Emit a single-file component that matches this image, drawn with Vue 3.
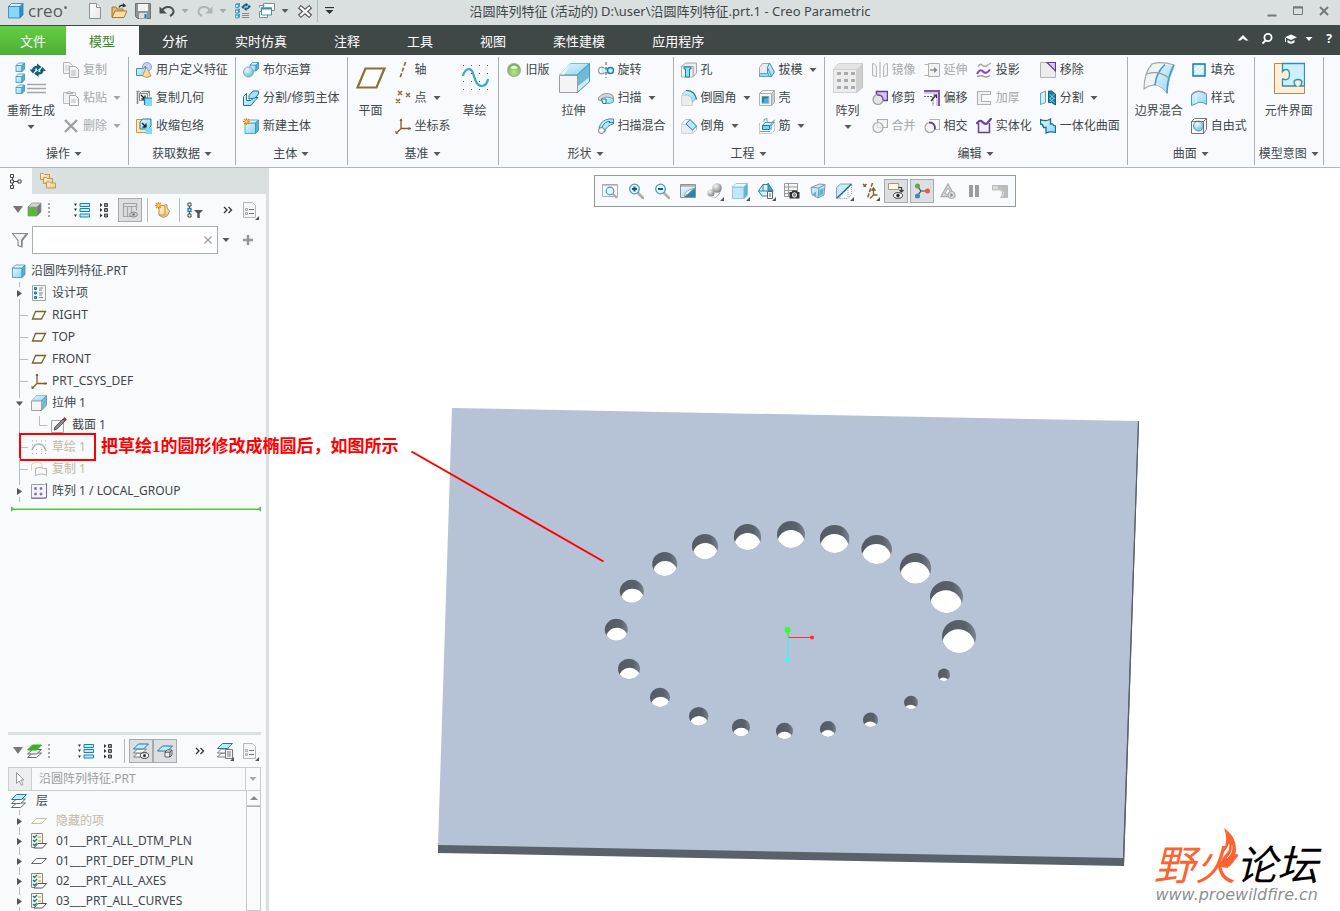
<script setup>
import { h, ref } from 'vue'

const BLUE = ['url(#g-blue)', '#e8f8fe', '#5badd0', '#3a94ba']
const GRAY = ['#f4f4f4', '#fff', '#c9cbcc', '#a0a3a5']

/** Box in a cabinet projection: front face s x s, depth d. */
const cube = (x, y, s, d, [front, top, side, stroke]) =>
  `<g stroke="${stroke}" stroke-width=".8" stroke-linejoin="round">
    <path d="M${x} ${y + d}h${s}v${s}h-${s}z" fill="${front}"/>
    <path d="M${x} ${y + d}l${d}-${d}h${s}l-${d} ${d}z" fill="${top}"/>
    <path d="M${x + s} ${y + d}l${d}-${d}v${s}l-${d} ${d}z" fill="${side}"/>
  </g>`

const sheet = (x, y, w, hgt, k, fill, stroke) =>
  `<path d="M${x + k} ${y}h${w - k}l-${k} ${hgt}H${x}z" fill="${fill}" stroke="${stroke}" stroke-linejoin="round"/>`

const swirl = (x, y) =>
  `<g transform="translate(${x} ${y})" fill="none" stroke="#145f80" stroke-width="2.400"><path d="M2.500 6.500Q3 3 7 3"/><path d="M12 6Q11.500 9.500 7.500 9.500"/><path d="M6.500-.500l4.500 3.500-4.500 3.500zM8 6l-4.500 3.500L8 13z" fill="#145f80" stroke="none"/><path d="M-1 5.500h6.500L2.500 9.500zM15.500 7H9l3-4z" fill="#145f80" stroke="none"/></g>`

const magnifier = (extra) =>
  `<path d="M10 10l5 5" stroke="#b5ad9d" stroke-width="2.600" stroke-linecap="round"/><circle cx="6.500" cy="6" r="4.800" fill="#e4f5fc" stroke="#4b9abc" stroke-width="1.300"/>${extra}`

const icons = {
  logo: cube(0.5, 0.5, 11.5, 3, ['#8ad6f7', '#d6f1fd', '#2d92c2', '#2584b4']),
  newDoc: '<path d="M2.500.5h7l4 4v11h-11z" fill="url(#g-paper)" stroke="#8c9191"/><path d="M9.500.5v4h4" fill="#fff" stroke="#8c9191"/>',
  open: '<path d="M1 14V4h4l1 2h6v8z" fill="#e9b864" stroke="#a77b30"/><path d="M1 14.500L4 8h12l-3 6.500z" fill="#fbe0a4" stroke="#a77b30"/><path d="M8 4.500Q9 1.500 13 2.500" fill="none" stroke="#333" stroke-width="1.400"/><path d="M12 0l3.500 3-4 1.500z" fill="#333"/>',
  save: '<path d="M.5.5h15v15h-13l-2-2z" fill="#8e9394" stroke="#6c7172"/><path d="M3 1h10v7H3z" fill="#f2f3f3"/><path d="M4 10h8v5.500H4z" fill="#dce0e1"/><path d="M9.500 11h2v4h-2z" fill="#1673a0"/>',
  undo: '<path d="M3 8C5 3 13 2.500 14.500 8q.5 3-3.500 5" fill="none" stroke="#4d4f4f" stroke-width="2"/><path d="M.5 3.500v7H8z" fill="#4d4f4f"/>',
  redo: '<path d="M13 8C11 3 3 2.500 1.500 8q-.5 3 3.500 5" fill="none" stroke="#b0b4b4" stroke-width="2"/><path d="M15.500 3.500v7H8z" fill="#b0b4b4"/>',
  regenSmall: cube(0.5, 0.5, 3, 1, BLUE) + cube(0.5, 6, 3, 1, BLUE) + cube(0.5, 11, 3, 1, BLUE) + `<g transform="translate(6 0) scale(.62)">${swirl(1, 0)}</g>` + '<path d="M7 10.500h7M7 12.500h7M7 14.500h7" stroke="#888"/>',
  windows: '<path d="M4.500.5h11v7h-11z" fill="#fff" stroke="#888"/><path d="M.5 8.500h8v6h-8zM.5 4.500v-2h5" fill="#fff" stroke="#888"/><path d="M2.500 5h10v7h-10z" fill="#fff" stroke="#3092bd"/><path d="M2 4.500h11v2H2z" fill="#3092bd"/>',
  closeWin: '<path d="M4 5l8 7M12 5l-8 7" stroke="#444" stroke-width="4.400" stroke-linecap="square"/><path d="M4 5l8 7M12 5l-8 7" stroke="#f5f5f5" stroke-width="2.400" stroke-linecap="square"/>',
  caret: '<path d="M.5 2h7L4 6z" fill="currentColor"/>',
  customize: '<path d="M0 .5h9" stroke="#333" stroke-width="1.300"/><path d="M.5 3h8L4.500 7z" fill="#333"/>',
  min: '<path d="M3.500 12.500h9" stroke="#777" stroke-width="2"/>',
  max: '<path d="M3.500 4h9v7.500h-9z" fill="none" stroke="#777"/><path d="M3 4.500h10" stroke="#777" stroke-width="2"/>',
  close: '<path d="M4 4l8 8M12 4l-8 8" stroke="#777" stroke-width="2"/>',
  chevronUp: '<path d="M2.500 9.500L8 4l5.500 5.500H10.500L8 7.500l-2.500 2z" fill="#fff"/>',
  search: '<circle cx="9" cy="6.500" r="3.600" fill="none" stroke="#fff" stroke-width="1.800"/><path d="M6.500 9.500l-3 3" stroke="#fff" stroke-width="2"/>',
  hat: '<path d="M8 3.500l6 2.800-6 2.800-6-2.800z" fill="#fff"/><path d="M4.500 9v2.500q3.500 2.500 7 0V9L8 10.700z" fill="#fff"/><path d="M2.500 7v4" stroke="#fff"/>',

  regen: cube(1, 1, 6, 2.500, BLUE) + cube(1, 12, 6, 2.500, BLUE) + cube(1, 23, 6, 2.500, BLUE) + swirl(15.500, 2) + '<path d="M12 22.500h19M12 26.500h19M12 30.500h19" stroke="#a3a6a8" stroke-width="1.600"/>',
  copy: '<path d="M.5.5h6l3 3v8h-9z" fill="#f4f4f4" stroke="#b3b5b6"/><path d="M2 4h5M2 6h5M2 8h5" stroke="#c6c8c9"/><path d="M6.500 4.500h6l3 3v8h-9z" fill="#f4f4f4" stroke="#a8aaab"/><path d="M8 9h5M8 11h5M8 13h5" stroke="#b5b7b8"/>',
  paste: '<path d="M.5 2.500h12v11H.500z" fill="#f2f2f2" stroke="#b8babb"/><path d="M3.500 3.500v-1h1.500q1.500-3 3 0H9.500v1z" fill="#ddd" stroke="#a9abac"/><path d="M6.500 5.500h6l3 3v7h-9z" fill="#fafafa" stroke="#a5a7a8"/><path d="M8 10h5M8 12h5" stroke="#b5b7b8"/>',
  del: '<path d="M2 2l12 12M14 2L2 14" stroke="#9d9fa0" stroke-width="2.400"/>',
  udf: '<circle cx="11" cy="5" r="4.500" fill="#c7d3f5" stroke="#8b9bd2"/><path d="M.5 6.500h7l2-2.500v7l-2 2.500h-7z" fill="url(#g-blue)" stroke="#3b94ba"/><path d="M10.500 5l4.500 9q-4 3-8.500 0z" fill="url(#g-tan)" stroke="#b08d4c" stroke-width=".8"/>',
  copyGeom: '<path d="M1.500 14V1.500M.5 1.500h3M7 1.500h7" stroke="#888" stroke-width="1.600"/><path d="M3.500 3.500h8v7h-8zM11.500 3.500l2-2M3.500 3.500l2-2h8v5" fill="#eceded" stroke="#888"/><path d="M5 5l4 4M9 5.500V9H5.500" stroke="#222" fill="none" stroke-width="1.300"/><path d="M9 8h7v8H9z" fill="#7fd8f7"/><path d="M8.500 15V8H16" fill="none" stroke="#157ba6" stroke-width="1.200"/>',
  shrink: '<path d="M.5 1.500h12v13H.500z" fill="#ffe6b2" stroke="#c59b48"/><path d="M4 4l2.500-3H15v7l-3 3H4z" fill="url(#g-blue)" stroke="#1e7ca5"/><path d="M6 5l4 4M10 5.500V9H6.500" stroke="#123" fill="none" stroke-width="1.300"/><path d="M9.500 9.500H16V16H9.500z" fill="#7fd8f7"/>',
  bool: cube(7, 0.5, 6, 2.500, BLUE) + '<circle cx="5.500" cy="10" r="5" fill="url(#g-ball)" stroke="#5aa5c4" stroke-width=".8"/>',
  splitBody: '<path d="M.5 6.500l3-3v7H8l3-3h4l-3 3-4 5H.500z" fill="url(#g-blue)" stroke="#1b759d"/><path d="M6 9V5.500L10 1h5.500v3L12 8z" fill="#a9dff5" stroke="#1b759d"/>',
  newBody: cube(2, 2, 10.5, 3, BLUE) + '<path d="M3.500 0v7M0 3.500h7M1 1l5 5M6 1L1 6" stroke="#f08a00" stroke-width="1.200"/><circle cx="3.500" cy="3.500" r="1.200" fill="#ffe066"/>',
  plane: '<path d="M10.500 6.500h19l-8 19H2.500z" fill="#fff" stroke="#8a6f33" stroke-width="2.200"/>',
  axis: '<path d="M10.500 0L5 16" stroke="#8a6f33" stroke-width="1.700" stroke-dasharray="4 2"/>',
  points: '<path d="M3 1l4 4M7 1L3 5M11 3l4 4M15 3l-4 4M1 9l4 4M5 9l-4 4" stroke="#8a6f33" stroke-width="1.500"/>',
  csys: '<path d="M6 1v9.500h10M6 10.500l-5 5" fill="none" stroke="#7c6226" stroke-width="1.300"/><path d="M4.500 3L6 .5 7.500 3zM13.500 9l2.500 1.500-2.500 1.500zM.5 12.500v3h3z" fill="#7c6226"/>',
  sketch: '<g fill="#555"><path d="M4 3h1v1H4zM12 3h1v1h-1zM20 3h1v1h-1zM28 3h1v1h-1zM4 11h1v1H4zM12 11h1v1h-1zM20 11h1v1h-1zM28 11h1v1h-1zM4 19h1v1H4zM12 19h1v1h-1zM20 19h1v1h-1zM28 19h1v1h-1zM4 27h1v1H4zM12 27h1v1h-1zM20 27h1v1h-1zM28 27h1v1h-1z"/></g><path d="M4 14C6 6 12 5 14 11s3 13 9 13q5-.5 6-7" fill="none" stroke="#3aa6d4" stroke-width="2.200"/>',
  legacy: '<circle cx="8" cy="8" r="7" fill="#a3a8a3"/><circle cx="8" cy="8" r="6" fill="url(#g-green)"/><path d="M4 6q4-5 8 0-4 2-8 0z" fill="#e9fbd8"/>',
  extrude: '<path d="M1.500 12.500L12.500 1.500h19l-12 11z" fill="url(#g-blue)" stroke="#7fb9cf"/><path d="M12.500 1.500L1.500 12.500h5z" fill="#e8f6fb"/><path d="M19.500 12.500l12-11v18l-12 11z" fill="#6fbad7" stroke="#4796b4"/><path d="M19.500 29.500v-5l11.500-9v4z" fill="#d2eefa"/><path d="M1.500 13.500h18v17h-18z" fill="#f5f4f4" stroke="#9a9c9e"/>',
  revolve: '<ellipse cx="3.500" cy="8.500" rx="3" ry="3.300" fill="#fff" stroke="#999" stroke-width="1.300"/><path d="M3 5.500Q8 7 12 5.500v6Q8 10 3 11.500" fill="#d4effa" stroke="#60a9c8" stroke-width=".7"/><circle cx="12.500" cy="8.500" r="3" fill="#cbeefb" stroke="#1d7fa8" stroke-width="1.500"/><path d="M8 0v16" stroke="#555" stroke-dasharray="3 2"/>',
  sweep: '<path d="M.5 7.500L5 4q6-2 10 1.500l.5 4-4 1.500q-4-3-7 0L.500 10z" fill="#d4d6d8" stroke="#95999c"/><path d="M4 8.500q5-3 11.500.5v3q-3 2-5.500 1.500l-6-1z" fill="url(#g-blue)" stroke="#5ba6c4"/><path d="M3.500 9h4.500v4.500H5z" fill="#e3f6fd" stroke="#24799c"/>',
  sweptBlend: '<path d="M1 10Q3 2 11 1h4.500v5Q9 7 6.500 14z" fill="url(#g-blue)" stroke="#3b93b8"/><path d="M4 9q3-6 8-5.500" fill="none" stroke="#1f7fa8"/><circle cx="3.500" cy="12.500" r="3" fill="#f3f3f3" stroke="#777"/><path d="M11 4.500h4.500" stroke="#1f7fa8"/>',
  hole: '<path d="M.5 4.500l4-3.500h11v10L12 15V4.500z" fill="#ececec" stroke="#a3a5a7"/><path d="M.5 4.500H12V15H.5z" fill="#f7f7f7" stroke="#aaacae"/><path d="M3 5h7v2H8.500v8h-4V7H3z" fill="#8edcf6" stroke="#1680ac"/>',
  round: '<path d="M.5 5.500h6q5 0 5 5v5H.500z" fill="#ececee" stroke="#d3d4d6"/><path d="M1 4l4-3.500q9 0 10.500 8l-4 3.500Q11 5 3 4z" fill="url(#g-blue)" stroke="#7bbdd6" stroke-width=".7"/><path d="M5 .5q9 0 10.500 9" fill="none" stroke="#1a7ba3" stroke-width="1.200"/>',
  chamfer: '<path d="M.5 6.500h5l6 5v4H.500z" fill="#ececee" stroke="#d3d4d6"/><path d="M.5 6l4-4.500h4M15.500 8v4l-4 3.500" fill="none" stroke="#bbb"/><path d="M5 6l4-4.500L15.500 8l-4 4z" fill="#b5eafb" stroke="#1a7ba3"/>',
  draft: '<path d="M.5 5.500l3-4h7l-2 4v9h-8z" fill="#ececec" stroke="#a3a5a7"/><path d="M8.500 14V5.500l2-4.500 5 9-3 4.500z" fill="url(#g-blue)" stroke="#3c93b7"/><path d="M.5 14.500h9v-3h-9z" fill="#8ed9f4" stroke="#5ba6c4"/><path d="M8.500 5.500l4 9" stroke="#3c93b7"/>',
  shell: cube(0.5, 0.5, 12, 3, GRAY) + '<path d="M3 6.500h7v7H3z" fill="#4ea9cd" stroke="#8ccde4"/><path d="M3 6.500h7l-2 2H5v3l-2 2z" fill="#2d7e9f"/>',
  rib: '<path d="M.5 5.500V15.500H12l3.500-3V1.500l-3 3v6l-3 0" fill="none" stroke="#999" stroke-dasharray="1 1"/><path d="M3.500 7.500l2.500-3h9l-3 3z" fill="#d4f2fc" stroke="#4796b4"/><path d="M3.500 7.500h7v4h-7z" fill="#79d3f3" stroke="#1b7ba4"/><path d="M5 4V1.500l3-1v3.500M12 12V6l3-3.500" fill="none" stroke="#5ba6c4"/><path d="M1 13.500h10" stroke="#5ba6c4"/>',
  pattern: '<path d="M1.500 7.500l5-6h24v24l-6 5h-23z" fill="#cfcfcf" stroke="#c0c1c2"/><path d="M1.500 7.500l5-6h24l-6 6z" fill="#e4e4e4"/><path d="M1.500 7.500h23v23h-23z" fill="#ececec" stroke="#d0d1d2"/><g fill="#a9abac"><path d="M5 10h4v3H5zM12 10h4v3h-4zM19 10h4v3h-4zM5 17h4v3H5zM12 17h4v3h-4zM19 17h4v3h-4zM5 24h4v3H5zM12 24h4v3h-4zM19 24h4v3h-4z"/></g>',
  mirror: '<path d="M.5 1.500q4 0 4 5v8l-4-1zM15.500 1.500q-4 0-4 5v8l4-1z" fill="#f2f2f2" stroke="#b4b6b7"/><path d="M8 0v16" stroke="#a8aaab"/>',
  trim: '<path d="M4.500 1.500h11v9h-11z" fill="#d6c9f0" stroke="#5c3f98" stroke-width="1.500"/><circle cx="6" cy="9.500" r="5" fill="#e4e4e6" stroke="#9b9d9f" stroke-width="1.200"/><path d="M5 5q6-.5 6 5" fill="none" stroke="#7a4fb8" stroke-width="1.400"/>',
  merge: '<path d="M5.500 1.500h10v8h-10z" fill="#f2f2f2" stroke="#aaacad" stroke-width="1.200"/><circle cx="6" cy="9.500" r="5" fill="#efefef" fill-opacity=".7" stroke="#aaacad" stroke-width="1.200"/>',
  extend: '<path d="M.5 2.500h4v11h-4M4.500 2.500h3" fill="none" stroke="#b0b2b3"/><path d="M4.500 1.500h11v13h-11z" fill="#f1f1f1" stroke="#aeb0b1"/><path d="M6 8h5" stroke="#888" stroke-width="1.300"/><path d="M10 5l3.500 3L10 11z" fill="#888"/>',
  offset: '<path d="M0 1h15v15" fill="none" stroke="#8055b0" stroke-width="2"/><path d="M0 3h13v13" fill="none" stroke="#d6c8ea" stroke-width="2"/><path d="M0 6.500h9V16" fill="none" stroke="#666" stroke-dasharray="2 1"/><path d="M7 11l5-6M9.500 5H12.500v3" fill="none" stroke="#333" stroke-width="1.200"/>',
  intersect: '<path d="M5.500 1.500h10v10h-4" fill="none" stroke="#b0b2b3" stroke-width="1.200"/><circle cx="6" cy="9.500" r="5" fill="#f3f3f4" stroke="#a0a2a4" stroke-width="1.200"/><path d="M5 4.500q6.500 0 6 7" fill="none" stroke="#5e3c94" stroke-width="1.800"/>',
  project: '<path d="M2 5q2-4 4-2t4 1 5-3" fill="none" stroke="#a5a7a8" stroke-width="1.400"/><path d="M1 12q3-6 6-2.500t7-2" fill="none" stroke="#8a3fbd" stroke-width="2"/><path d="M1 14.500q5-1.500 7 0t6-1" fill="none" stroke="#9b9d9f" stroke-width="1.400"/>',
  thicken: '<path d="M1.500 1.500h13v3h-9v7h9v3h-13z" fill="#f2f2f2" stroke="#b0b2b3" stroke-width="1.200"/>',
  solidify: '<path d="M2.500 5v9.500h11V5" fill="#f3eefb" stroke="#694299" stroke-width="1.500"/><path d="M.5 6q3-5 6-2t5 1l4-5" fill="none" stroke="#694299" stroke-width="2.200"/>',
  remove: '<path d="M.5.5h15v15H.500z" fill="#ececec" stroke="#b1b2b3"/><path d="M7 .5h8.500V9z" fill="#d8cbf1" stroke="#5e3c94" stroke-width="1.200"/>',
  split: '<path d="M.5 3.500l5-2.500v11.500l-5 2z" fill="#cdeffb" stroke="#60a7c4"/><path d="M8.500 1h3l4 3v11l-4-2.500h-3z" fill="#1d7ba3" stroke="#145f80"/><path d="M9.500 4l5 5M9.500 8l5 5M14.500 4l-5 5M14.500 8l-5 4" stroke="#a9dff5" stroke-width=".8"/>',
  unify: '<path d="M.5 1.500q5 2.500 10-.500v5h2q1 2 3 2v6.500q-5-1.500-9.500.5V9.500H3.500Q3 6 .5 6z" fill="url(#g-blue)" stroke="#16719a" stroke-width="1.300"/>',
  boundary: '<path d="M1 27Q1 11 9 2q9-3 22 1-6 12-7 28-5-7-12-8-6 0-11 4z" fill="#eef3f5" stroke="#a5a8aa" stroke-width="1.200"/><path d="M23 3q8 0 8 5-6 10-7 23-5-7-11-8Q14 10 23 3z" fill="url(#g-blue)"/><path d="M22 2.500Q13 11 12 23m12 8q0-15 7-28" fill="none" stroke="#3d9cc3" stroke-width="1.600"/><path d="M4 12q11-4 22 4" fill="none" stroke="#9a9d9f" stroke-width="1.200"/>',
  fill: '<path d="M2 2h12v12H2z" fill="#c5edfa" stroke="#17779f" stroke-width="1.400"/><path d="M4 8l4-4M4 12l8-8M8 12l4-4" stroke="#fff" stroke-width="1.400"/>',
  style: '<path d="M.5 5q6-7 15-1v10.500q-6-4-10-1l-5 2z" fill="url(#g-blue)" stroke="#4a9fc2"/><path d="M.5 5q6-7 15-1" fill="none" stroke="#999" stroke-width="1.300"/><path d="M5 13V4" stroke="#e9f8fd"/>',
  freestyle: '<circle cx="7.500" cy="8" r="5" fill="url(#g-ball)" stroke="#4a9fc2"/><path d="M.5 3.500l3-3h12v11l-3 4H.500zM.5 3.500h12v12M12.500 3.500l3-3" fill="none" stroke="#666" stroke-width=".9"/>',
  component: '<path d="M1.500 1.500h30v30h-30z" fill="#ffeed1" stroke="#ad8c50"/><path d="M9.500 1.500H31.500V24H27q2-1.500 2-3.500 0-3-4-3t-4 3q0 2 2 3.500H9.500v-7q1.500 0 3 .8 4 0 4-5.300t-4-5q-1.500 0-3 2z" fill="#cdf0fc" stroke="#2d90ba" stroke-width="1.300"/>',

  treeTab: '<g fill="#fff" stroke="#444"><path d="M4.500 3v12M5 8.500h6" fill="none"/><path d="M2.500 1.500h3v3h-3zM2.500 7h3v3h-3zM2.500 12.500h3v3h-3zM10 7h3v3h-3z"/></g>',
  folders: '<g fill="url(#g-tan)" stroke="#b8924a" stroke-width=".9"><path d="M.5 6.500V.5h3l1 1h5v5z"/><path d="M3.500 10.500v-6h3l1 1h5v5z"/><path d="M6.500 15v-6h3l1 1h5v5z"/></g>',
  down: '<path d="M0 1h10L5 8z" fill="#777"/>',
  greenCube: cube(1, 1, 9, 4, ['#55b933', '#d5d5d5', '#777', '#8d9590']),
  grip: '<path d="M2 0v2M2 4v2M2 8v2M2 12v2" stroke="#a3a6a8" stroke-width="2"/>',
  expandAll: '<path d="M0 1.500h3L1.500 4zM0 6.500h3L1.500 9zM0 12.500h3L1.500 15z" fill="#333"/><path d="M6 1.500h9.500v3H6zM6 6.500h9.500v3H6zM6 12h9.500v3H6z" fill="#bfeafa" stroke="#1982ad"/>',
  collapseAll: '<path d="M4 1l2.500 2L4 5zM4 6l2.500 2L4 10zM4 11.500l2.500 2L4 15.500z" fill="#333"/><path d="M8.500 1.500h3v3h-3zM8.500 6.500h3v3h-3zM8.500 12h3v3h-3z" fill="#999" stroke="#444"/>',
  columns: '<path d="M1.500 1.500h13v3h-13zM1.500 4.500v10h4v-10M5.500 4.500v10h4M9.500 4.500v5M14.500 4.500v4" fill="none" stroke="#a3a5a7" stroke-width="1.200"/><ellipse cx="11.500" cy="12.500" rx="4" ry="2.500" fill="#ccc" stroke="#888"/><circle cx="11.500" cy="12.500" r="1.200" fill="#777"/>',
  newGroup: '<path d="M4 3.500h6V13H4zM10 2l2 1v3l2.500 3-2 4.500L8 15.500 4 13" fill="url(#g-tan)" stroke="#b8924a"/><path d="M3.500 0v7M0 3.500h7M1 1l5 5M6 1L1 6" stroke="#f08a00" stroke-width="1.200"/><circle cx="3.500" cy="3.500" r="1.200" fill="#ffe066"/>',
  treeFilter: '<path d="M2.500 2v12" stroke="#555"/><path d="M1 1h3v3H1zM1 12h3v3H1z" fill="#fff" stroke="#444"/><path d="M1 6.500h3v3H1z" fill="#bfeafa" stroke="#1982ad" stroke-width="1.300"/><path d="M7 8h9l-3.300 3.500V16h-2.400v-4.500z" fill="#555"/>',
  more: '<path d="M4 5l3 3-3 3M8.500 5l3 3-3 3" fill="none" stroke="#333" stroke-width="1.300"/>',
  settings: '<path d="M1.500.5h9l3 3v12h-12z" fill="#f4f5f6" stroke="#b3b6b8"/><path d="M7 7.500h5M7 11.500h5" stroke="#777"/><path d="M3.500 6.500h2v2h-2zM3.500 10.500h2v2h-2z" fill="none" stroke="#999" stroke-width=".8"/>',
  funnel: '<path d="M.5 1.500h15l-5.500 7v6.500l-4-1.500V8.500z" fill="#f3f3f3" stroke="#888" stroke-width="1.100"/><path d="M9 8l4.500-6H16L10.500 9v5H9z" fill="#888"/>',
  clear: '<path d="M4.500 4.500l7 7M11.500 4.500l-7 7" stroke="#999" stroke-width="1.200"/>',
  plus: '<path d="M8 3v10M3 8h10" stroke="#999" stroke-width="2.600"/>',
  part: cube(1.5, 2, 9.5, 3, BLUE),
  design: '<path d="M1.500.5h13v15h-13z" fill="#f7f7f7" stroke="#a2a4a6"/><path d="M3.500 2.500h2v2h-2zM3.500 7h2v2h-2zM3.500 11.500h2v2h-2z" fill="#4ab0da" stroke="#147aa6"/><path d="M8 3h4M8 5h3M8 8h4M8 10h3M8 12.500h4" stroke="#888"/>',
  planeSmall: '<path d="M4.500 4.500h10l-4 7.500h-9z" fill="#fff" stroke="#7c6226" stroke-width="1.300"/>',
  extrudeSmall: '<path d="M.5 6l5-5.500h10l-5 5.500z" fill="url(#g-blue)" stroke="#7fb9cf" stroke-width=".8"/><path d="M10.500 6l5-5.500v9.500l-5 5.500z" fill="#6fbad7" stroke="#4796b4" stroke-width=".8"/><path d="M.5 6h10v9.500H.5z" fill="#f5f4f4" stroke="#a0a2a4"/>',
  section: '<path d="M.5 3.500h12v12H.5z" fill="#f7f8f8" stroke="#a5a7a9"/><path d="M3 13l1-3 8-8 2 2-8 8z" fill="#8a8c8e" stroke="#3c3e40" stroke-width=".8"/><path d="M12 2l1.500-1.500 2 2L14 4z" fill="#c33" stroke="#822" stroke-width=".6"/>',
  sketchOff: '<path d="M1 11Q3 5 8 5t7 7" fill="none" stroke="#b0b1ab" stroke-width="1.600"/><path d="M1 2h1M5 2h1M10 2h1M14 2h1M1 14.500h1M5 14.500h1M10 14.500h1M14 14.500h1M5 10.500h1M10 10.500h1M1 6h1M14 6h1" stroke="#aaa"/>',
  copyOff: '<path d="M.5 9.500V3.500Q6-1 11 3v5" fill="#fbf9f4" stroke="#ddd3bd"/><path d="M4.500 14.500v-7q5-2.500 8 0h3v7q-2-1.500-5-1.500t-6 1.500z" fill="#f7f8f8" stroke="#b2b3ae"/>',
  patternSmall: '<path d="M.5 1.500h13l2-1v14l-2 1H.5z" fill="#f6f6f8" stroke="#9d9fa3"/><path d="M15.500.5v14.500H.5" fill="none" stroke="#7a5fb0"/><path d="M3.500 4.500h2v2h-2zM9 4.500h2v2H9zM3.500 10h2v2h-2zM9 10h2v2H9z" fill="#6c51a8" stroke="#9b8cc4" stroke-width=".8"/>',
  layerGreen: sheet(0.5, 10, 14, 4.500, 5, '#fff', '#666') + sheet(0.5, 6.500, 14, 4.500, 5, '#eee', '#666') + sheet(0.5, 2, 14, 5, 5, '#3fae2a', '#3fae2a'),
  layers: sheet(0.5, 10, 14, 4.500, 5, '#fff', '#666') + sheet(0.5, 6, 14, 4.500, 5, '#fff', '#666') + sheet(0.5, 1.500, 15, 5, 5, '#bfeafa', '#1a7ba3'),
  layersEye: sheet(0.5, 10, 13, 4, 4, '#fff', '#777') + sheet(0.5, 6, 13, 4, 4, '#fff', '#777') + sheet(0.5, 1, 15, 5, 5, '#bfeafa', '#1a7ba3') + '<ellipse cx="11.500" cy="12.500" rx="4.200" ry="2.800" fill="#fff" stroke="#333"/><circle cx="11.500" cy="12.500" r="1.500" fill="#333"/>',
  layerCube: sheet(0.5, 3, 15, 5, 5, '#bfeafa', '#1a7ba3') + cube(8, 7, 5, 2, ['#eee', '#fff', '#ddd', '#444']),
  layersPage: sheet(0.5, 10, 12, 4, 4, '#fff', '#777') + sheet(0.5, 6, 12, 4, 4, '#fff', '#777') + sheet(0.5, 0.5, 15, 5, 5, '#bfeafa', '#1a7ba3') + '<path d="M8.500 6.500h7v9h-7z" fill="#f6f6f6" stroke="#777"/><path d="M10 9h4M10 11h4M10 13h4" stroke="#777"/>',
  pointer: '<path d="M4.500 1.500l7.500 7.500H9l2 4.500-1.800.8L7.300 10l-2.800 2.500z" fill="#fff" stroke="#9a9c9e"/>',
  scrollUp: '<path d="M0 6h8L4 2z" fill="#8a8c8e"/>',
  sheetOff: sheet(0.5, 5.500, 15, 5, 5, '#fdfbf5', '#c9c0a8'),
  sheet: sheet(0.5, 5.500, 15, 5, 5, '#fff', '#666'),
  sheetRule: '<path d="M.5.5h11v14H.500z" fill="#fdf6dc" stroke="#888"/><path d="M2 3l1.500 1.500L6 2M2 7l1.500 1.500L6 6M2 11l1.500 1.500L6 10" fill="none" stroke="#1579a8" stroke-width="1.300"/><path d="M7 4h3M7 8h3" stroke="#b49a5b"/>' + sheet(3, 10.500, 12.500, 4.500, 4, '#fff', '#555'),

  refit: '<path d="M.5 1.500h15v12H.500z" fill="#f7f7f7" stroke="#aeb1b3"/><path d="M.5 2h15" stroke="#9da0a2"/><path d="M11 11l4 4" stroke="#b5ad9d" stroke-width="2.400"/><circle cx="8" cy="8" r="3.800" fill="#dff4fc" stroke="#4b9abc" stroke-width="1.200"/>',
  zoomIn: magnifier('<path d="M6.500 3.500v5M4 6h5" stroke="#0f5f86" stroke-width="2"/>'),
  zoomOut: magnifier('<path d="M4 6h5" stroke="#0f5f86" stroke-width="2"/>'),
  repaint: '<path d="M.5 1.500h15v13H.500z" fill="#e9f7fc" stroke="#8e9294"/><path d="M1 5h14L2 14H1z" fill="url(#g-blue)"/><path d="M15 5v9H4z" fill="#2a86ad"/><path d="M1 2h14v2H1z" fill="#b3b7b9"/><path d="M14.500 5Q10 8 8 11l-4 2 2-4q4-3 8.500-4z" fill="#fff" stroke="#777" stroke-width=".6"/>',
  render: '<circle cx="11" cy="5" r="4.800" fill="url(#g-gray)"/><circle cx="5" cy="10" r="3.600" fill="url(#g-gray)"/><path d="M4 14q5 2 8-2l3-5q-2 8-8 8z" fill="#8d8d8d"/>',
  display: cube(0.5, 0.5, 11.500, 3.500, ['#bfe8f8', '#eaf9fe', '#5fb0d0', '#7dc0da']),
  orient: '<path d="M.5 8l4.500-6.500h5L15 8l-2 5H4z" fill="#d8f2fc" stroke="#2886ae"/><path d="M.5 8H15M5 1.500V8M10 0l5 8h-5z" fill="#4ba3c7" stroke="#2886ae"/><path d="M9.500 8.500h5v7h-5z" fill="#f6f6f6" stroke="#666"/><path d="M11 11h2M11 13h2" stroke="#666"/>',
  snapshot: '<path d="M.5.5h13v13H.5zM.5 4h13M.5 7.500h13M.5 10.500h6M4.500.5v13" fill="#f5f5f5" stroke="#999"/><path d="M5.500 9h2l1-1.500h4L13.500 9h2v6.500h-10z" fill="#333"/><circle cx="10.500" cy="12" r="2.200" fill="#888" stroke="#eee"/>',
  perspective: '<path d="M1 4.500L9.500 1 15 1.500 14 12l-6 3-6-3.500z" fill="url(#g-blue)" stroke="#7a9daa"/><path d="M1 4.500l8 .500L15 1.500M9 5l-1 10" fill="none" stroke="#7a9daa"/><path d="M2 11.500l4-3v6zM9.500 7l4-2-.5 6-4 2z" fill="#6bb1cb"/>',
  sectionView: '<path d="M.5 4.500l4-3.500h11L1 15z" fill="#c4ecfa"/><path d="M.5 15V4.500l4-3.500h11" fill="none" stroke="#9a9d9f"/><path d="M15.500 2v9.500l-4 4H2M12 5v10M3 15l9-10" fill="none" stroke="#999" stroke-dasharray="1 1"/><path d="M.5 15.500L15.500 1" stroke="#1a6c91" stroke-width="1.400"/>',
  datum: '<path d="M1 1l3.500 3.500M4.500 1L1 4.500M10.500 0l-5 15" stroke="#7c6226" stroke-width="1.500" stroke-dasharray="4 1.500"/><path d="M11.500 6v6h4M11.500 12L8 15.500M11.500 5l-1.500 2h3z" fill="none" stroke="#7c6226" stroke-width="1.300"/>',
  annot: '<path d="M.5.500h10v6H.500z" fill="#fff7d6" stroke="#999"/><path d="M10.500 4.500h3V9M11.500 7l2 2 2-2" fill="none" stroke="#333" stroke-width="1.200"/><ellipse cx="10" cy="12.500" rx="4.500" ry="2.800" fill="#fff" stroke="#333"/><circle cx="10" cy="12.500" r="1.700" fill="#222"/>',
  spin: '<path d="M3.500 3.500L7 8l-3.500 4.500M7 8h7" stroke="#444" fill="none" stroke-width="1.200"/><circle cx="3.500" cy="3" r="2.500" fill="#5da84c"/><circle cx="3.500" cy="13" r="2.500" fill="#2f8fc0"/><circle cx="13.500" cy="8" r="2.500" fill="#e05a50"/>',
  simulate: '<path d="M8 1l7 12.500H1z" fill="#e0e0e0" stroke="#aaacad" stroke-width="1.300"/><path d="M8 5l3.500 6h-7z" fill="#fff" stroke="#aaa"/><circle cx="11.500" cy="12" r="3.600" fill="#ddd" stroke="#aaa"/><path d="M10.500 10l3 2-3 2z" fill="#888"/>',
  pause: '<path d="M3 2h4v12H3zM9 2h4v12H9z" fill="#9b9d9e"/>',
  result: '<path d="M.5 2.500h15v12h-7Q13 9 8 7H.500z" fill="#d9d9d9" stroke="#bbb"/><path d="M6 2.500h9.500v12h-5Q15 7 6 6z" fill="#bbb"/>',

  branchMid: '<path d="M19.500 0v22M20 11.500h8" stroke="#b7bdc0" fill="none"/>',
  branchClosed: '<path d="M19.500 0v5M19.500 17v5" stroke="#b7bdc0"/><path d="M17 8l5 3.500-5 3.500z" fill="#555"/>',
  branchOpen: '<path d="M19.500 0v6M19.500 16v6" stroke="#b7bdc0"/><path d="M16 9.500h7L19.500 14z" fill="#555"/>',
  branchChild: '<path d="M19.500 0v22M39.500 2v9.500h8" stroke="#b7bdc0" fill="none"/>',
}

const Icon = (props) =>
  h('svg', {
    viewBox: `0 0 ${props.w ?? 16} ${props.hgt ?? props.w ?? 16}`,
    width: props.w ?? 16,
    height: props.hgt ?? props.w ?? 16,
    'aria-hidden': 'true',
    innerHTML: icons[props.name],
  })
Icon.props = ['name', 'w', 'hgt']

const quick = [
  { icon: 'newDoc', label: '新建' },
  { icon: 'open', label: '打开' },
  { icon: 'save', label: '保存' },
  { icon: 'undo', label: '撤消', caret: 'off' },
  { icon: 'redo', label: '重做', caret: 'off' },
  { icon: 'regenSmall', label: '重新生成' },
  { icon: 'windows', label: '窗口', caret: 'on' },
  { icon: 'closeWin', label: '关闭' },
]

const tabs = ['文件', '模型', '分析', '实时仿真', '注释', '工具', '视图', '柔性建模', '应用程序']
const activeTab = ref('模型')

// A column is either one large button or a stack of small ones
const groups = [
  {
    name: '操作',
    cols: [
      { big: 'regen', label: '重新生成', caret: true },
      [
        { icon: 'copy', label: '复制', off: true },
        { icon: 'paste', label: '粘贴', off: true, caret: true },
        { icon: 'del', label: '删除', off: true, caret: true },
      ],
    ],
  },
  {
    name: '获取数据',
    cols: [
      [
        { icon: 'udf', label: '用户定义特征' },
        { icon: 'copyGeom', label: '复制几何' },
        { icon: 'shrink', label: '收缩包络' },
      ],
    ],
  },
  {
    name: '主体',
    cols: [
      [
        { icon: 'bool', label: '布尔运算' },
        { icon: 'splitBody', label: '分割/修剪主体' },
        { icon: 'newBody', label: '新建主体' },
      ],
    ],
  },
  {
    name: '基准',
    cols: [
      { big: 'plane', label: '平面' },
      [
        { icon: 'axis', label: '轴' },
        { icon: 'points', label: '点', caret: true },
        { icon: 'csys', label: '坐标系' },
      ],
      { big: 'sketch', label: '草绘' },
    ],
  },
  {
    name: '形状',
    cols: [
      [{ icon: 'legacy', label: '旧版' }],
      { big: 'extrude', label: '拉伸' },
      [
        { icon: 'revolve', label: '旋转' },
        { icon: 'sweep', label: '扫描', caret: true },
        { icon: 'sweptBlend', label: '扫描混合' },
      ],
    ],
  },
  {
    name: '工程',
    cols: [
      [
        { icon: 'hole', label: '孔' },
        { icon: 'round', label: '倒圆角', caret: true },
        { icon: 'chamfer', label: '倒角', caret: true },
      ],
      [
        { icon: 'draft', label: '拔模', caret: true },
        { icon: 'shell', label: '壳' },
        { icon: 'rib', label: '筋', caret: true },
      ],
    ],
  },
  {
    name: '编辑',
    cols: [
      { big: 'pattern', label: '阵列', caret: true },
      [
        { icon: 'mirror', label: '镜像', off: true },
        { icon: 'trim', label: '修剪' },
        { icon: 'merge', label: '合并', off: true },
      ],
      [
        { icon: 'extend', label: '延伸', off: true },
        { icon: 'offset', label: '偏移' },
        { icon: 'intersect', label: '相交' },
      ],
      [
        { icon: 'project', label: '投影' },
        { icon: 'thicken', label: '加厚', off: true },
        { icon: 'solidify', label: '实体化' },
      ],
      [
        { icon: 'remove', label: '移除' },
        { icon: 'split', label: '分割', caret: true },
        { icon: 'unify', label: '一体化曲面' },
      ],
    ],
  },
  {
    name: '曲面',
    cols: [
      { big: 'boundary', label: '边界混合' },
      [
        { icon: 'fill', label: '填充' },
        { icon: 'style', label: '样式' },
        { icon: 'freestyle', label: '自由式' },
      ],
    ],
  },
  { name: '模型意图', cols: [{ big: 'component', label: '元件界面' }] },
]

const modelTree = [
  { branch: 'branchClosed', icon: 'design', label: '设计项' },
  { branch: 'branchMid', icon: 'planeSmall', label: 'RIGHT' },
  { branch: 'branchMid', icon: 'planeSmall', label: 'TOP' },
  { branch: 'branchMid', icon: 'planeSmall', label: 'FRONT' },
  { branch: 'branchMid', icon: 'csys', label: 'PRT_CSYS_DEF' },
  { branch: 'branchOpen', icon: 'extrudeSmall', label: '拉伸 1' },
  { branch: 'branchChild', icon: 'section', label: '截面 1', child: true },
  {
    branch: 'branchMid',
    icon: 'sketchOff',
    label: '草绘 1',
    off: true,
    note: '把草绘1的圆形修改成椭圆后，如图所示',
  },
  { branch: 'branchMid', icon: 'copyOff', label: '复制 1', off: true },
  { branch: 'branchClosed', icon: 'patternSmall', label: '阵列 1 / LOCAL_GROUP' },
]

const layerTree = [
  { icon: 'sheetOff', label: '隐藏的项', off: true },
  { icon: 'sheetRule', label: '01___PRT_ALL_DTM_PLN' },
  { icon: 'sheet', label: '01___PRT_DEF_DTM_PLN' },
  { icon: 'sheetRule', label: '02___PRT_ALL_AXES' },
  { icon: 'sheetRule', label: '03___PRT_ALL_CURVES' },
]

const viewTools = [
  { icon: 'refit', label: '重新调整' },
  { icon: 'zoomIn', label: '放大' },
  { icon: 'zoomOut', label: '缩小' },
  { icon: 'repaint', label: '重画' },
  { icon: 'render', label: '渲染选项', menu: true },
  { icon: 'display', label: '显示样式', menu: true },
  { icon: 'orient', label: '已保存方向', menu: true },
  { icon: 'snapshot', label: '视图管理器' },
  { icon: 'perspective', label: '透视图' },
  { icon: 'sectionView', label: '截面', menu: true },
  { icon: 'datum', label: '基准显示过滤器', menu: true },
  { icon: 'annot', label: '注释显示', on: true },
  { icon: 'spin', label: '旋转中心', on: true },
  { icon: 'simulate', label: '仿真' },
  { icon: 'pause', label: '暂停' },
  { icon: 'result', label: '结果' },
]

// [cx, cy, rx, ry] of every patterned hole, counter-clockwise from the largest
const holes = [
  [959, 636.5, 17, 16.5],
  [946.5, 597, 16.5, 16],
  [915.5, 568.3, 15.7, 15.4],
  [876.7, 549.5, 15.3, 14.6],
  [834.6, 539, 14.7, 14],
  [791, 534.5, 14, 13.6],
  [747.5, 537, 13.6, 13],
  [705, 546.5, 13, 12.6],
  [664.7, 564, 12.5, 12],
  [631.8, 591.3, 12, 11.5],
  [616.3, 629.8, 11.5, 11],
  [629, 669, 11, 10.2],
  [660, 697.5, 10.1, 9.7],
  [698.7, 716.3, 9.7, 9.4],
  [741, 727.5, 9.1, 8.7],
  [784.5, 731, 8.6, 8.2],
  [828, 729, 8.1, 7.9],
  [870.5, 719.8, 7.6, 7.3],
  [911, 702.5, 7, 6.7],
  [944, 674.8, 6.1, 6.3],
]

const filterText = ref('')
</script>

<template>
  <div class="creo">
    <svg class="creo__defs" width="0" height="0" aria-hidden="true">
      <defs>
        <linearGradient id="g-blue" x1="0" y1="0" x2="1" y2="1">
          <stop offset="0" stop-color="#e2f6fd" />
          <stop offset="1" stop-color="#8fd5ef" />
        </linearGradient>
        <linearGradient id="g-tan" x1="0" y1="0" x2="1" y2="1">
          <stop offset="0" stop-color="#fff4da" />
          <stop offset="1" stop-color="#efc878" />
        </linearGradient>
        <linearGradient id="g-paper" x1="0" y1="0" x2="1" y2="1">
          <stop offset="0" stop-color="#ffffff" />
          <stop offset="1" stop-color="#e4e6e6" />
        </linearGradient>
        <radialGradient id="g-ball" cx=".35" cy=".3" r=".8">
          <stop offset="0" stop-color="#f1fbff" />
          <stop offset="1" stop-color="#5db4d6" />
        </radialGradient>
        <radialGradient id="g-gray" cx=".35" cy=".3" r=".8">
          <stop offset="0" stop-color="#f6f6f6" />
          <stop offset="1" stop-color="#777777" />
        </radialGradient>
        <radialGradient id="g-green" cx=".5" cy=".7" r=".7">
          <stop offset="0" stop-color="#b6ec7f" />
          <stop offset="1" stop-color="#6fae4c" />
        </radialGradient>
        <linearGradient id="g-hole" x1="0" y1="0" x2="1" y2="0">
          <stop offset="0" stop-color="#545b65" />
          <stop offset=".7" stop-color="#59616b" />
          <stop offset="1" stop-color="#79828e" />
        </linearGradient>
      </defs>
    </svg>

    <header class="titlebar">
      <div class="titlebar__left">
        <Icon name="logo" />
        <span class="titlebar__brand">creo<i class="titlebar__mark"></i></span>
        <div class="quick">
          <button v-for="q in quick" :key="q.icon" class="btn" type="button" :aria-label="q.label">
            <Icon :name="q.icon" />
            <Icon v-if="q.caret" class="caret" :class="{ 'caret--off': q.caret === 'off' }" name="caret" :w="8" />
          </button>
          <button class="btn quick__custom" type="button" aria-label="自定义">
            <Icon name="customize" :w="9" :hgt="8" />
          </button>
        </div>
      </div>
      <h1 class="titlebar__title">沿圆阵列特征 (活动的) D:\user\沿圆阵列特征.prt.1 - Creo Parametric</h1>
      <div class="titlebar__window">
        <button class="btn" type="button" aria-label="最小化"><Icon name="min" /></button>
        <button class="btn" type="button" aria-label="最大化"><Icon name="max" /></button>
        <button class="btn" type="button" aria-label="关闭窗口"><Icon name="close" /></button>
      </div>
    </header>

    <nav class="tabs">
      <button
        v-for="tab in tabs"
        :key="tab"
        type="button"
        class="tabs__item"
        :class="{ 'tabs__item--file': tab === '文件', 'tabs__item--active': tab === activeTab }"
        @click="activeTab = tab"
      >
        {{ tab }}
      </button>
      <div class="tabs__tools">
        <button class="btn" type="button" aria-label="折叠功能区"><Icon name="chevronUp" /></button>
        <button class="btn" type="button" aria-label="搜索"><Icon name="search" /></button>
        <button class="btn" type="button" aria-label="学习">
          <Icon name="hat" /><Icon class="caret caret--light" name="caret" :w="8" />
        </button>
        <button class="btn tabs__help" type="button">?</button>
      </div>
    </nav>

    <section class="ribbon">
      <div v-for="group in groups" :key="group.name" class="group">
        <div class="group__cols">
          <template v-for="(col, i) in group.cols" :key="i">
            <button v-if="col.big" class="btn big" type="button">
              <Icon :name="col.big" :w="32" />
              <span class="big__label">{{ col.label }}</span>
              <Icon v-if="col.caret" class="caret" name="caret" :w="8" />
            </button>
            <div v-else class="stack">
              <button
                v-for="item in col"
                :key="item.label"
                class="btn stack__item"
                type="button"
                :disabled="item.off"
              >
                <Icon :name="item.icon" />
                <span class="stack__label">{{ item.label }}</span>
                <Icon v-if="item.caret" class="caret" name="caret" :w="8" />
              </button>
            </div>
          </template>
        </div>
        <button class="btn group__name" type="button">
          {{ group.name }}<Icon class="caret" name="caret" :w="8" />
        </button>
      </div>
    </section>

    <main class="work">
      <aside class="side">
        <div class="side__tabs">
          <button class="btn side__tab side__tab--active" type="button" aria-label="模型树"><Icon name="treeTab" /></button>
          <button class="btn side__tab" type="button" aria-label="文件夹浏览器"><Icon name="folders" /></button>
        </div>

        <div class="tools">
          <button class="btn tools__head" type="button" aria-label="显示">
            <Icon name="down" :w="10" /><Icon name="greenCube" /><Icon name="grip" :w="4" :hgt="14" />
          </button>
          <div class="tools__set tools__set--first">
            <button class="btn" type="button" aria-label="全部展开"><Icon name="expandAll" /></button>
            <button class="btn" type="button" aria-label="全部折叠"><Icon name="collapseAll" /></button>
            <button class="btn toggle" type="button" aria-label="树列"><Icon name="columns" /></button>
          </div>
          <div class="tools__set">
            <button class="btn" type="button" aria-label="新建组"><Icon name="newGroup" /></button>
          </div>
          <div class="tools__set tools__set--wide">
            <button class="btn" type="button" aria-label="树过滤器"><Icon name="treeFilter" /></button>
          </div>
          <div class="tools__end">
            <button class="btn" type="button" aria-label="更多"><Icon name="more" /></button>
            <button class="btn menu" type="button" aria-label="设置"><Icon name="settings" /></button>
          </div>
        </div>

        <div class="filter">
          <Icon name="funnel" />
          <div class="filter__box">
            <input v-model="filterText" class="filter__input" type="text" aria-label="过滤模型树" />
            <button class="btn filter__clear" type="button" aria-label="清除" @click="filterText = ''">
              <Icon name="clear" />
            </button>
          </div>
          <button class="btn" type="button" aria-label="过滤选项"><Icon class="caret" name="caret" :w="8" /></button>
          <button class="btn filter__add" type="button" aria-label="添加"><Icon name="plus" /></button>
        </div>

        <ul class="tree">
          <li class="tree__row tree__row--root"><Icon name="part" /><span>沿圆阵列特征.PRT</span></li>
          <li
            v-for="node in modelTree"
            :key="node.label"
            class="tree__row"
            :class="{ 'tree__row--off': node.off }"
          >
            <Icon class="tree__branch" :name="node.branch" :w="node.child ? 51 : 31" :hgt="22" />
            <Icon :name="node.icon" />
            <span class="tree__label">{{ node.label }}</span>
            <template v-if="node.note">
              <span class="tree__frame"></span>
              <strong class="tree__note">{{ node.note }}</strong>
            </template>
          </li>
        </ul>
        <div class="insert"></div>

        <div class="layers">
          <div class="layers__split"></div>
          <div class="tools tools--layers">
            <button class="btn tools__head" type="button" aria-label="层显示">
              <Icon name="down" :w="10" /><Icon name="layerGreen" /><Icon name="grip" :w="4" :hgt="14" />
            </button>
            <div class="tools__set tools__set--first">
              <button class="btn" type="button" aria-label="展开层"><Icon name="expandAll" /></button>
              <button class="btn" type="button" aria-label="折叠层"><Icon name="collapseAll" /></button>
            </div>
            <div class="tools__set tools__set--joined">
              <button class="btn toggle" type="button" aria-label="显示层"><Icon name="layersEye" /></button>
              <button class="btn toggle" type="button" aria-label="层项"><Icon name="layerCube" /></button>
            </div>
            <div class="tools__end">
              <button class="btn" type="button" aria-label="更多层命令"><Icon name="more" /></button>
              <button class="btn menu" type="button" aria-label="层"><Icon name="layersPage" /></button>
              <button class="btn menu" type="button" aria-label="层设置"><Icon name="settings" /></button>
            </div>
          </div>
          <div class="combo">
            <span class="combo__pick"><Icon name="pointer" /></span>
            <select class="combo__select" aria-label="活动层对象" disabled>
              <option>沿圆阵列特征.PRT</option>
            </select>
            <span class="combo__arrow"><Icon class="caret caret--off" name="caret" :w="8" /></span>
          </div>
          <div class="layers__body">
            <ul class="tree tree--layers">
              <li class="tree__row tree__row--root"><Icon name="layers" /><span class="tree__label">层</span></li>
              <li
                v-for="node in layerTree"
                :key="node.label"
                class="tree__row"
                :class="{ 'tree__row--off': node.off }"
              >
                <Icon class="tree__branch" name="branchClosed" :w="31" :hgt="22" />
                <Icon :name="node.icon" />
                <span class="tree__label">{{ node.label }}</span>
              </li>
            </ul>
            <div class="scroll">
              <button class="btn scroll__up" type="button" aria-label="向上滚动"><Icon name="scrollUp" :w="8" /></button>
              <div class="scroll__thumb"></div>
            </div>
          </div>
        </div>
      </aside>

      <section class="view">
        <svg class="view__scene" viewBox="269 168 1071 743" role="img" aria-label="模型">
          <path d="M1136 421l3 2-15 443-686-13v-9z" fill="#59616b" />
          <path d="M452 408l686 13-15 437-685-13z" fill="#b6c3d6" />
          <path d="M1138 421h1l-15 445-1-8z" fill="#59616b" />
          <g v-for="([cx, cy, rx, ry], i) in holes" :key="i">
            <clipPath :id="`hole-${i}`"><ellipse :cx="cx" :cy="cy" :rx="rx" :ry="ry" /></clipPath>
            <ellipse :cx="cx" :cy="cy" :rx="rx" :ry="ry" fill="url(#g-hole)" />
            <ellipse
              :cx="cx + (790 - cx) * 0.004"
              :cy="cy + 8.7"
              :rx="rx * 0.97"
              :ry="ry * 0.97"
              fill="#fff"
              :clip-path="`url(#hole-${i})`"
            />
          </g>
          <path d="M788 637.500h24" stroke="#ff3030" />
          <path d="M787.500 630l1 8" stroke="#2fe62f" />
          <path d="M788.500 638l-1 22" stroke="#30f5ff" />
          <circle cx="787.500" cy="630" r="3" fill="#30ff30" />
          <circle cx="812" cy="637.500" r="2" fill="#ff3030" />
          <circle cx="787.500" cy="660" r="2.200" fill="#30ffff" />
          <path d="M411.500 451.500L603.500 561.500" stroke="#f00" stroke-width="2" />
        </svg>

        <div class="view__tools">
          <button
            v-for="tool in viewTools"
            :key="tool.icon"
            class="btn"
            :class="{ toggle: tool.on, menu: tool.menu }"
            type="button"
            :aria-label="tool.label"
          >
            <Icon :name="tool.icon" />
          </button>
        </div>

        <div class="forum">
          <div class="forum__name"><span class="forum__fire">野火</span>论坛</div>
          <svg class="forum__flame" viewBox="0 0 18 42" width="18" height="42" aria-hidden="true">
            <path d="M4 0q12 8 12 21 0 7-4 11-2 2-4 8l-7-1q-1-7 3-11 7-6 5-13-2 7-6 9 6-12 1-24z" fill="#fd6330" />
            <path d="M12 17q1 8-5 13" fill="none" stroke="#fff" stroke-width=".8" />
          </svg>
          <div class="forum__url">www.proewildfire.cn</div>
        </div>
      </section>
    </main>
  </div>
</template>

<style>
body {
  margin: 0;
}
</style>

<style scoped>
.creo {
  --ink: #40464a;
  --muted: #a6a9ab;
  --bar: #dae0df;
  --panel: #f8fafc;
  --line: #b0b8b9;

  display: flex;
  flex-direction: column;
  height: 100vh;
  overflow: hidden;
  background: #fff;
  color: var(--ink);
  font-family: 'Noto Sans', 'Noto Sans CJK SC', sans-serif;
  font-size: 12px;
  line-height: 16px;
}

.creo__defs {
  position: absolute;
}

.creo svg {
  display: block;
  flex: none;
}

.btn {
  display: flex;
  align-items: center;
  margin: 0;
  padding: 0;
  border: 0;
  background: none;
  color: inherit;
  font: inherit;
  white-space: nowrap;
}

.btn:disabled {
  color: var(--muted);
}

.caret {
  color: #55595c;
}

.caret--off,
.btn:disabled .caret {
  color: #a3a7a8;
}

.caret--light {
  color: #fff;
}

.titlebar {
  display: grid;
  flex: none;
  grid-template-columns: 1fr auto 1fr;
  align-items: center;
  box-sizing: border-box;
  height: 25px;
  padding-bottom: 3px;
  background: var(--bar);
}

.titlebar__left {
  display: flex;
  align-items: center;
  padding-left: 8px;
}

.titlebar__brand {
  display: flex;
  margin: 0 20px 0 4px;
  color: #55595b;
  font-family: 'Open Sans', sans-serif;
  font-size: 17px;
  line-height: 20px;
}

.titlebar__mark {
  width: 3px;
  height: 3px;
  margin: 5px 0 0 1px;
  border-radius: 50%;
  background: #6d7173;
}

.quick {
  display: flex;
  align-items: center;
  gap: 8px;
}

.quick .btn,
.tabs__tools .btn {
  gap: 6px;
}

.quick__custom {
  height: 22px;
  margin-left: -4px;
  padding-left: 7px;
  border-left: 1px solid #b3b9b9;
}

.titlebar__title {
  margin: 0;
  font-size: 13px;
  font-weight: 400;
  white-space: nowrap;
}

.titlebar__window {
  display: flex;
  gap: 10px;
  justify-content: flex-end;
  padding-right: 8px;
}

.tabs {
  display: flex;
  flex: none;
  height: 30px;
  background: #3f4747;
}

.tabs__item {
  padding: 0 24px 0 23px;
  border: 0;
  border-top: 1px solid #3f4747;
  background: none;
  color: #fff;
  font: inherit;
  font-size: 13px;
  white-space: nowrap;
}

.tabs__item--file {
  padding: 0 20px;
  background: linear-gradient(#62cf43, #4fae35);
}

.tabs__item--active {
  background: #f9fafd;
  color: #3c8a25;
}

.tabs__tools {
  display: flex;
  gap: 8px;
  align-items: center;
  margin-left: auto;
  padding: 0 3px 2px 0;
}

.tabs__help {
  justify-content: center;
  width: 16px;
  color: #fff;
  font-weight: 700;
}

.ribbon {
  display: flex;
  flex: none;
  border-bottom: 1px solid var(--line);
  background: #f9fafd;
}

.group {
  display: flex;
  flex-direction: column;
  align-items: center;
  margin: 2px 0;
  border-right: 1px solid #a9afb2;
}

.group__cols {
  display: flex;
  gap: 8px;
  padding: 0 7px;
}

.group__name {
  gap: 4px;
  margin-top: auto;
  padding: 6px 4px 3px;
}

.group__name .caret {
  margin-bottom: 1px;
}

.big {
  flex-direction: column;
  align-items: center;
  align-self: flex-start;
  min-width: 32px;
  padding-top: 5px;
}

.big__label {
  margin: 9px 0 4px;
}

.stack {
  display: flex;
  flex-direction: column;
  margin-top: -1px;
}

.stack__item {
  height: 28px;
}

.stack__label {
  margin: 0 6px 0 4px;
}

.stack__label:last-child {
  margin-right: 0;
}

.work {
  display: flex;
  flex: 1;
  min-height: 0;
}

.side {
  z-index: 1;
  display: flex;
  flex: none;
  flex-direction: column;
  width: 266px;
  border-right: 3px solid var(--bar);
  background: var(--panel);
}

.side__tabs {
  display: flex;
  flex: none;
  background: var(--bar);
}

.side__tab {
  justify-content: center;
  width: 32px;
  height: 26px;
}

.side__tab--active {
  background: var(--panel);
}

.tools {
  display: flex;
  flex: none;
  align-items: center;
  height: 32px;
  padding: 0 8px 0 13px;
}

.tools__head {
  gap: 4px;
}

.tools__set {
  display: flex;
  gap: 6px;
  align-items: center;
  height: 24px;
  margin-left: 5px;
  padding-left: 7px;
  border-left: 1px solid #b5bbbd;
}

.tools__set--first {
  margin-left: 16px;
  border-left: 0;
}

.tools__set--wide {
  margin-left: 8px;
}

.tools__set--joined {
  gap: 0;
  margin-left: 8px;
  padding-left: 4px;
}

.tools__end {
  display: flex;
  gap: 6px;
  margin-left: auto;
}

.tools--layers .tools__set--first {
  margin-left: 20px;
}

.tools--layers .tools__end {
  gap: 9px;
}

.toggle {
  justify-content: center;
  box-sizing: border-box;
  width: 24px;
  height: 24px;
  border: 1px solid #a7abae;
  background: #dcdee1;
}

.menu {
  position: relative;
}

.menu::after {
  position: absolute;
  right: -1px;
  bottom: -2px;
  border: 2px solid #555;
  border-top-color: transparent;
  border-left-color: transparent;
  content: '';
}

.filter {
  display: flex;
  flex: none;
  gap: 4px;
  align-items: center;
  padding: 0 10px 0 12px;
}

.filter__box {
  position: relative;
  flex: 1;
}

.filter__input {
  display: block;
  box-sizing: border-box;
  width: 100%;
  height: 28px;
  padding: 0 24px 0 4px;
  border: 1px solid #a5adb0;
  background: #fff;
  font: inherit;
}

.filter__clear {
  position: absolute;
  top: 6px;
  right: 2px;
}

.filter__add {
  margin-left: 6px;
}

.tree {
  flex: none;
  margin: 6px 0 0;
  padding: 0;
  list-style: none;
}

.tree__row {
  position: relative;
  display: flex;
  align-items: center;
  height: 22px;
  white-space: nowrap;
}

.tree__row--root {
  gap: 4px;
  padding-left: 11px;
}

.tree__row--off {
  color: #c2b9a4;
}

.tree__label {
  margin-left: 5px;
}

.tree__frame {
  position: absolute;
  top: -3px;
  left: 19px;
  box-sizing: border-box;
  width: 77px;
  height: 28px;
  border: 2px solid #f00;
}

.tree__note {
  position: absolute;
  left: 101px;
  color: #f00;
  font-family: 'Liberation Serif', 'Noto Sans CJK SC', serif;
  font-size: 17px;
  line-height: 22px;
}

.insert {
  position: relative;
  flex: none;
  height: 2px;
  margin: 6px 5px 0 11px;
  background: linear-gradient(#a8e29a 50%, #57c33c 50%);
}

.insert::before,
.insert::after {
  position: absolute;
  top: -2px;
  border: 3px solid transparent;
  content: '';
}

.insert::before {
  left: 0;
  border-right-width: 0;
  border-left-color: #57c33c;
}

.insert::after {
  right: 0;
  border-left-width: 0;
  border-right-color: #57c33c;
}

.layers {
  margin-top: auto;
}

.layers__split {
  height: 3px;
  margin: 0 5px 0 8px;
  background: var(--bar);
}

.layers__body {
  display: flex;
  justify-content: space-between;
  padding-right: 5px;
}

.combo {
  display: flex;
  box-sizing: border-box;
  height: 24px;
  margin: 0 5px 0 8px;
  border: 1px solid #c9cfd0;
  color: #9b9fa2;
}

.combo__pick,
.combo__arrow {
  display: flex;
  align-items: center;
  padding: 0 3px;
  background: #eceeef;
}

.combo__arrow {
  border-left: 1px solid #c9cfd0;
  background: none;
}

.combo__select {
  flex: 1;
  min-width: 0;
  padding: 0 7px;
  border: 0;
  border-left: 1px solid #c9cfd0;
  background: var(--panel);
  color: inherit;
  font: inherit;
  opacity: 1;
  appearance: none;
}

.tree--layers {
  margin: 0;
}

.tree--layers .tree__row {
  height: 20px;
}

.tree--layers .tree__label {
  margin-left: 9px;
}

.tree--layers .tree__row--root .tree__label {
  margin-left: 5px;
}

.tree--layers .tree__branch {
  margin: -1px 0;
}

.scroll {
  display: flex;
  flex-direction: column;
  box-sizing: border-box;
  width: 15px;
  border: 1px solid #c5cbcc;
  border-top: 0;
}

.scroll__up {
  justify-content: center;
  height: 15px;
  border-bottom: 1px solid #c5cbcc;
}

.scroll__thumb {
  flex: 1;
  border-top: 1px solid #aeb4b6;
  background: var(--panel);
}

.view {
  position: relative;
  flex: 1;
  min-width: 0;
  background: #fff;
}

.view__scene {
  width: 100%;
  height: 100%;
}

.view__tools {
  position: absolute;
  top: 7px;
  left: 50%;
  display: flex;
  gap: 2px;
  padding: 3px;
  border: 1px solid #95999c;
  background: #f9fafd;
  transform: translateX(-50%);
}

.view__tools .btn {
  justify-content: center;
  width: 24px;
  height: 24px;
}

.view__tools .menu::after {
  right: 2px;
  bottom: 2px;
}

.forum {
  position: absolute;
  right: 22px;
  bottom: 7px;
  text-align: right;
}

.forum__name {
  color: #000;
  font-size: 41px;
  font-style: italic;
  line-height: 44px;
}

.forum__fire {
  color: #fd6330;
}

.forum__flame {
  position: absolute;
  top: -14px;
  left: 66px;
}

.forum__url {
  color: #8f8f8f;
  font-family: 'DejaVu Sans', sans-serif;
  font-size: 16px;
  font-style: italic;
  line-height: 18px;
}
</style>
